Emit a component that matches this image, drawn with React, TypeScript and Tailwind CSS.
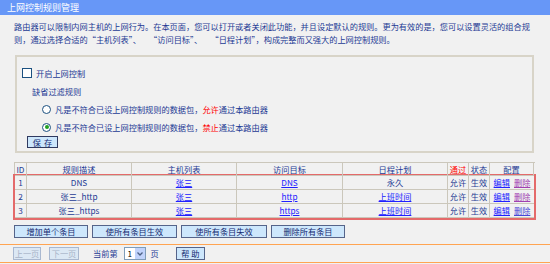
import React from "react";

const rows = [
  { id: 1, desc: "DNS", host: "张三", target: "DNS", plan: "永久", planLink: false, delColor: "text-[#a040b0]" },
  { id: 2, desc: "张三_http", host: "张三", target: "http", plan: "上班时间", planLink: true, delColor: "text-[#a040b0]" },
  { id: 3, desc: "张三_https", host: "张三", target: "https", plan: "上班时间", planLink: true, delColor: "text-[#4848d8]" },
];

const cols = "grid grid-cols-[12px_105px_105px_106px_105px_21px_21px_44px]";
const cell = "flex items-center justify-center border-r border-b border-[#cbc7bb] h-full";

function Btn({ children, w, disabled }: { children: React.ReactNode; w: string; disabled?: boolean }) {
  return (
    <div
      className={`${w} h-[13px] flex items-center justify-center border ${
        disabled ? "border-[#a9b8d0] bg-[#dce8f4] text-[#a8b4c8]" : "border-[#55648a] bg-[#cde7fc] text-[#152a70]"
      }`}
    >
      {children}
    </div>
  );
}

export default function App() {
  return (
    <div
      className="w-[550px] h-[264px] bg-[#f1f1f1] overflow-hidden text-[8.2px] text-[#1d3a94]"
      style={{ fontFamily: "SimSun, 'Noto Sans CJK SC', sans-serif" }}
    >
      <div className="h-[15px] bg-[#6797f7] text-white text-[9px] pl-[7px] flex items-center">上网控制规则管理</div>

      <div className="pl-[14px] pr-[10px] pt-[5px] leading-[13px] [font-feature-settings:'fwid']">
        路由器可以限制内网主机的上网行为。在本页面，您可以打开或者关闭此功能，并且设定默认的规则。更为有效的是，您可以设置灵活的组合规则，通过选择合适的“主机列表”、 “访问目标”、 “日程计划”，构成完整而又强大的上网控制规则。
      </div>

      <div className="ml-[15px] mt-[9px] w-[519px] h-[98px] border-2 border-[#d8d4c8] flex flex-col">
        <div className="flex items-center h-[12px] mt-[10px] pl-[5px]">
          <div className="w-[10px] h-[10px] border border-[#1c5180] bg-white" />
          <span className="ml-[4px]">开启上网控制</span>
        </div>
        <div className="h-[12px] mt-[6px] pl-[15px] flex items-center">缺省过滤规则</div>
        <div className="flex items-center h-[12px] mt-[6px] pl-[25px]">
          <div className="w-[9px] h-[9px] rounded-full border border-[#1c5180] bg-white" />
          <span className="ml-[4px]">
            凡是不符合已设上网控制规则的数据包，<span className="text-[#f00]">允许</span>通过本路由器
          </span>
        </div>
        <div className="flex items-center h-[12px] mt-[6px] pl-[25px]">
          <div className="w-[9px] h-[9px] rounded-full border border-[#1c5180] bg-white flex items-center justify-center">
            <div className="w-[4px] h-[4px] rounded-full bg-[#21a121]" />
          </div>
          <span className="ml-[4px]">
            凡是不符合已设上网控制规则的数据包，<span className="text-[#f00]">禁止</span>通过本路由器
          </span>
        </div>
        <div className="pl-[10px] mt-[3px]">
          <div className="w-[31px] h-[12px] border border-[#303a60] bg-[#cde7fc] flex items-center justify-center text-[#152a70] tracking-[3px] pl-[3px]">
            保存
          </div>
        </div>
      </div>

      <div className="ml-[14px] mt-[9px] w-[521px]">
        <div className={`${cols} h-[12px] border-t border-l border-[#cbc7bb]`}>
          <div className={cell}>ID</div>
          <div className={cell}>规则描述</div>
          <div className={cell}>主机列表</div>
          <div className={cell}>访问目标</div>
          <div className={cell}>日程计划</div>
          <div className={`${cell} text-[#f00]`}>通过</div>
          <div className={cell}>状态</div>
          <div className={cell}>配置</div>
        </div>
        <div className="border-2 border-[#e46a6a] -ml-[1px] w-[523px]">
          {rows.map((r) => (
            <div key={r.id} className={`${cols} h-[14px]`}>
              <div className={cell}>{r.id}</div>
              <div className={cell}>{r.desc}</div>
              <div className={cell}>
                <span className="underline text-[#2020ff]">{r.host}</span>
              </div>
              <div className={cell}>
                <span className="underline text-[#2020ff]">{r.target}</span>
              </div>
              <div className={cell}>
                {r.planLink ? <span className="underline text-[#2020ff]">{r.plan}</span> : r.plan}
              </div>
              <div className={cell}>允许</div>
              <div className={cell}>生效</div>
              <div className={`${cell} gap-[4px] border-r-0`}>
                <span className="underline text-[#2020ff]">编辑</span>
                <span className={`underline ${r.delColor}`}>删除</span>
              </div>
            </div>
          ))}
        </div>
      </div>

      <div className="flex gap-[4px] ml-[14px] mt-[5px]">
        <Btn w="w-[74px]">增加单个条目</Btn>
        <Btn w="w-[85px]">使所有条目生效</Btn>
        <Btn w="w-[86px]">使所有条目失效</Btn>
        <Btn w="w-[74px]">删除所有条目</Btn>
      </div>

      <div className="mt-[6px] border-t border-b border-[#ffa452] h-[19px] flex items-center pl-[13px]">
        <Btn w="w-[28px]" disabled>上一页</Btn>
        <div className="ml-[8px]">
          <Btn w="w-[30px]" disabled>下一页</Btn>
        </div>
        <span className="ml-[14px]">当前第</span>
        <div className="ml-[6px] w-[22px] h-[13px] bg-white border border-[#7f9db9] flex items-center">
          <span className="flex-1 pl-[3px] text-black">1</span>
          <div className="w-[10px] h-[11px] bg-[#c1d3fb] flex items-center justify-center">
            <svg width="6" height="4" viewBox="0 0 6 4">
              <path d="M0.5 0.5 L3 3 L5.5 0.5" stroke="#4d6185" strokeWidth="1.3" fill="none" />
            </svg>
          </div>
        </div>
        <span className="ml-[5px]">页</span>
        <div className="ml-[17px]">
          <Btn w="w-[29px]">帮 助</Btn>
        </div>
      </div>
    </div>
  );
}
